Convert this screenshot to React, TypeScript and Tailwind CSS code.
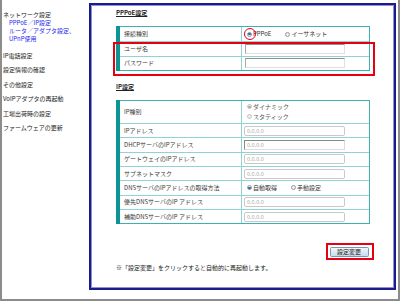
import React from "react";

const FONT = "font-['Noto_Sans_CJK_JP','Noto_Sans',sans-serif]";

function Radio({ checked, disabled }: { checked?: boolean; disabled?: boolean }) {
  return (
    <span
      className={
        "relative inline-flex items-center justify-center w-[5px] h-[5px] rounded-full border shrink-0 " +
        (disabled
          ? "border-[#c4c4c4] bg-[#ececec]"
          : "border-[#8e9aa8] bg-[#eef2f6]")
      }
    >
      {checked && (
        <span
          className={
            "w-[2.5px] h-[2.5px] rounded-full " + (disabled ? "bg-[#a8a8a8]" : "bg-[#2d5fa8]")
          }
        />
      )}
    </span>
  );
}

function Row({
  label,
  children,
  tall,
  first,
}: {
  label: string;
  children?: React.ReactNode;
  tall?: boolean;
  first?: boolean;
}) {
  return (
    <div
      className={
        "flex " +
        (tall ? "h-[22px] " : "h-[14.33px] ") +
        (first ? "" : "border-t border-[#8fd3d3]")
      }
    >
      <div className="w-[122px] shrink-0 border-r border-[#8fd3d3] flex items-center pl-[4px] text-[#3a3a3a]">
        {label}
      </div>
      <div className="flex-1 flex items-center">{children}</div>
    </div>
  );
}

function Table({ children }: { children: React.ReactNode }) {
  return (
    <div className="flex w-[254px]">
      <div className="w-[4px] shrink-0 bg-[#0d9494]" />
      <div className="flex-1 border-y border-r border-[#3fb0b0] flex flex-col">{children}</div>
    </div>
  );
}

function IpBox({ sunken }: { sunken?: boolean }) {
  return (
    <div
      className={
        "ml-[2px] w-[101px] h-[10px] flex items-center pl-[2px] text-[#a9a9a9] text-[5.5px] bg-white " +
        (sunken
          ? "border border-t-[#8a8a8a] border-l-[#8a8a8a] border-r-[#dcdcdc] border-b-[#dcdcdc]"
          : "border border-[#c9c9c9] rounded-[2px]")
      }
    >
      0.0.0.0
    </div>
  );
}

function TextBox() {
  return (
    <div className="ml-[3px] w-[100px] h-[10px] bg-white border border-t-[#8f8f8f] border-l-[#a8a8a8] border-r-[#e0e0e0] border-b-[#e0e0e0]" />
  );
}

export default function App() {
  return (
    <div className={"w-[400px] h-[301px] bg-white overflow-hidden text-[6px] leading-[8px] " + FONT}>
      <div className="h-[301px] border-l-2 border-r-2 border-b-2 border-[#8c8c8c] flex pt-[3px] pb-[9px] pr-[2px]">
        {/* Sidebar */}
        <nav className="w-[87px] shrink-0 pt-[8px] pl-[1px] text-[#222]">
          <div>ネットワーク設定</div>
          <div className="pl-[6px] text-[#2626f0]">
            <div>PPPoE／IP設定</div>
            <div>ルータ／アダプタ設定、</div>
            <div>UPnP使用</div>
          </div>
          <div className="mt-[8.5px] flex flex-col gap-[6.5px]">
            <div>IP電話設定</div>
            <div>設定情報の確認</div>
            <div>その他設定</div>
            <div>VoIPアダプタの再起動</div>
            <div>工場出荷時の設定</div>
            <div>ファームウェアの更新</div>
          </div>
        </nav>

        {/* Main panel */}
        <main className="flex-1 border-2 border-[#1b1b8e] shadow-[inset_1px_1px_0_#8f8fd2,inset_-1px_-1px_0_#8f8fd2] pl-[25px] pr-[24px] pt-[3.5px] text-[#333]">
          <div className="font-bold underline underline-offset-[1px] text-[#222]">PPPoE設定</div>

          <div className="relative mt-[9.5px]">
            <Table>
              <Row label="接続種別" first>
                <div className="flex items-center ml-[5px]">
                  <span className="relative flex">
                    <Radio checked />
                    <span className="absolute left-[-3.5px] top-[-3.5px] w-[12px] h-[12px] rounded-full border-[1.5px] border-[#e60012]" />
                  </span>
                  <span className="ml-[1px]">PPPoE</span>
                  <span className="ml-[14px] flex items-center">
                    <Radio />
                    <span className="ml-[1px]">イーサネット</span>
                  </span>
                </div>
              </Row>
              <Row label="ユーザ名">
                <TextBox />
              </Row>
              <Row label="パスワード">
                <TextBox />
              </Row>
            </Table>
            <div className="absolute left-[-3px] right-[-5px] top-[16px] h-[34px] border-2 border-[#e60012]" />
          </div>

          <div className="mt-[12px] font-bold underline underline-offset-[1px] text-[#222]">IP設定</div>

          <div className="mt-[9px]">
            <Table>
              <Row label="IP種別" tall first>
                <div className="ml-[5px] flex flex-col gap-[2px] text-[#555]">
                  <div className="flex items-center">
                    <Radio checked disabled />
                    <span className="ml-[1px]">ダイナミック</span>
                  </div>
                  <div className="flex items-center">
                    <Radio disabled />
                    <span className="ml-[1px]">スタティック</span>
                  </div>
                </div>
              </Row>
              <Row label="IPアドレス">
                <IpBox />
              </Row>
              <Row label="DHCPサーバのIPアドレス">
                <IpBox sunken />
              </Row>
              <Row label="ゲートウェイのIPアドレス">
                <IpBox />
              </Row>
              <Row label="サブネットマスク">
                <IpBox />
              </Row>
              <Row label="DNSサーバのIPアドレスの取得方法">
                <div className="ml-[5px] flex items-center">
                  <Radio checked />
                  <span className="ml-[1px]">自動取得</span>
                  <span className="ml-[14px] flex items-center">
                    <Radio />
                    <span className="ml-[1px]">手動設定</span>
                  </span>
                </div>
              </Row>
              <Row label="優先DNSサーバのIP アドレス">
                <IpBox />
              </Row>
              <Row label="補助DNSサーバのIP アドレス">
                <IpBox />
              </Row>
            </Table>
          </div>

          <div className="mt-[23px] flex justify-end w-[254px] pr-[1.5px]">
            <div className="relative">
              <div className="w-[39px] h-[10px] flex items-center justify-center rounded-[1.5px] border border-[#7b97ae] bg-gradient-to-b from-[#f1f6fa] to-[#c9dcea] text-[#1a1a1a]">
                設定変更
              </div>
              <div className="absolute left-[-3.5px] right-[-5px] top-[-4.5px] bottom-[-3px] border-2 border-[#e60012]" />
            </div>
          </div>

          <div className="mt-[7px] text-[#222]">※「設定変更」をクリックすると自動的に再起動します。</div>
        </main>
      </div>
    </div>
  );
}
